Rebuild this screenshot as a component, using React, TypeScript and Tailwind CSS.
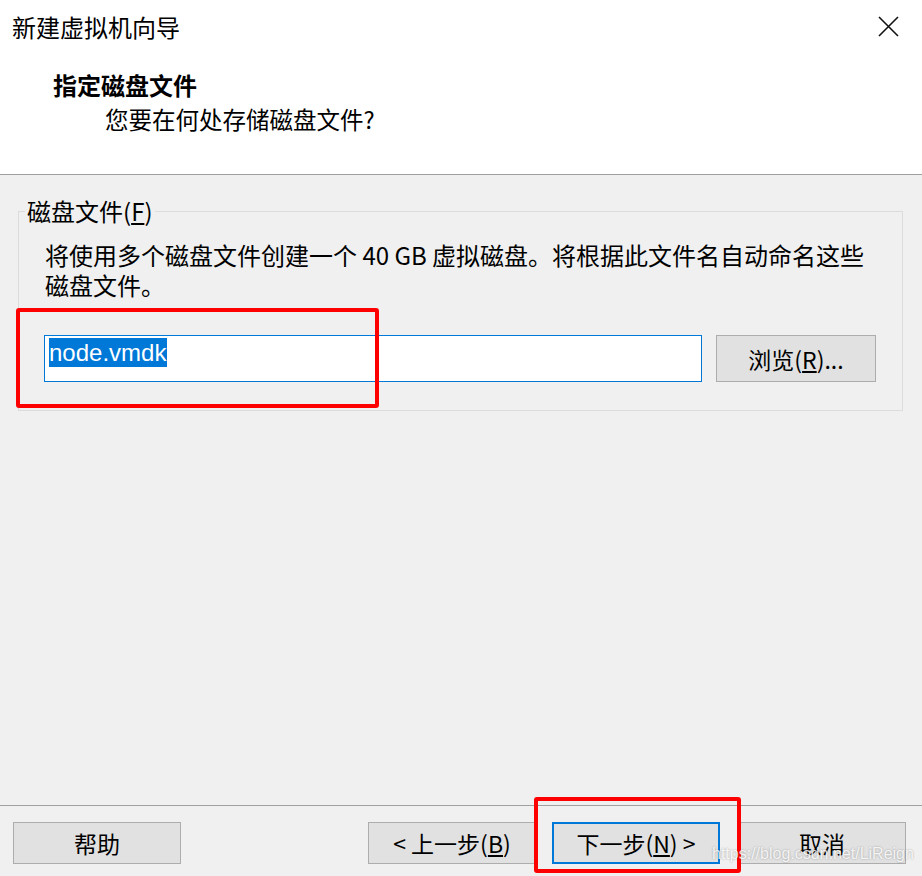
const font = { fontFamily: "'Noto Sans CJK SC', 'Noto Sans', sans-serif" };

function Btn({ children, primary }: { children: React.ReactNode; primary?: boolean }) {
  return (
    <button
      className={
        primary
          ? "w-[168px] h-[42px] bg-[#e1e1e1] border-2 border-[#0078d7] text-[23px] leading-[30px] text-black"
          : "w-[168px] h-[42px] bg-[#e1e1e1] border border-[#adadad] text-[23px] leading-[30px] text-black"
      }
    >
      {children}
    </button>
  );
}

export default function App() {
  return (
    <div className="relative w-[922px] h-[876px] bg-[#f0f0f0] flex flex-col overflow-hidden text-black" style={font}>
      {/* Header */}
      <div className="h-[175px] bg-white border-b border-[#a0a0a0] flex flex-col">
        <div className="flex items-start justify-between pl-[12px] pr-[23px] pt-[11px]">
          <div className="text-[24px] leading-[32px]">新建虚拟机向导</div>
          <svg width="21" height="21" viewBox="0 0 21 21" className="mt-[5px]">
            <path d="M1 1 L20 20 M20 1 L1 20" stroke="#111" strokeWidth="1.6" fill="none" />
          </svg>
        </div>
        <div className="pl-[53px] mt-[27px] text-[24px] leading-[30px] font-bold">指定磁盘文件</div>
        <div className="pl-[105px] mt-[4px] text-[23.5px] leading-[30px]">您要在何处存储磁盘文件?</div>
      </div>

      {/* Body */}
      <div className="flex-1 px-[18px] pt-[21px]">
        <fieldset className="w-[885px] border border-[#dcdcdc] px-[26px] pb-[28px]">
          <legend className="ml-[-20px] px-[2px] text-[24px] leading-[30px]">
            磁盘文件(<span className="underline underline-offset-2">F</span>)
          </legend>
          <p className="mt-[14px] text-[24px] leading-[30px] whitespace-nowrap">
            将使用多个磁盘文件创建一个 40 GB 虚拟磁盘。将根据此文件名自动命名这些
            <br />
            磁盘文件。
          </p>
          <div className="mt-[35px] flex items-start gap-[14px] ml-[-1px]">
            <div className="w-[658px] h-[47px] bg-white border border-[#0078d7] pl-[4px] pt-[2px]">
              <span
                className="inline-block bg-[#0078d7] text-white text-[24px] leading-[29px] pr-[1px]"
                style={{ fontFamily: "'Liberation Sans', Arial, sans-serif" }}
              >
                node.vmdk
              </span>
            </div>
            <button className="w-[160px] h-[47px] bg-[#e1e1e1] border border-[#adadad] text-[23px] leading-[30px]">
              浏览(<span className="underline underline-offset-2">R</span>)...
            </button>
          </div>
        </fieldset>
      </div>

      {/* Footer */}
      <div className="border-t border-[#a0a0a0] h-[71px] pt-[16px] pl-[13px] pr-[16px] flex items-start">
        <Btn>帮助</Btn>
        <div className="flex-1" />
        <Btn>
          &lt; 上一步(<span className="underline underline-offset-2">B</span>)
        </Btn>
        <div className="ml-[16px]">
          <Btn primary>
            下一步(<span className="underline underline-offset-2">N</span>) &gt;
          </Btn>
        </div>
        <div className="ml-[18px]">
          <Btn>取消</Btn>
        </div>
      </div>

      {/* Annotation overlays */}
      <div className="absolute left-[16px] top-[308px] w-[363px] h-[100px] border-[4px] border-[#ff0000] rounded-[3px]" />
      <div className="absolute left-[534px] top-[797px] w-[207px] h-[76px] border-[4px] border-[#ff0000] rounded-[3px]" />
      <div
        className="absolute left-[712px] top-[844px] whitespace-nowrap text-[16px] leading-[20px] text-white/85 [text-shadow:0_0_2px_rgba(0,0,0,0.35)]"
        style={{ fontFamily: "'Liberation Sans', Arial, sans-serif" }}
      >
        https://blog.csdn.net/LiReign
      </div>
    </div>
  );
}
